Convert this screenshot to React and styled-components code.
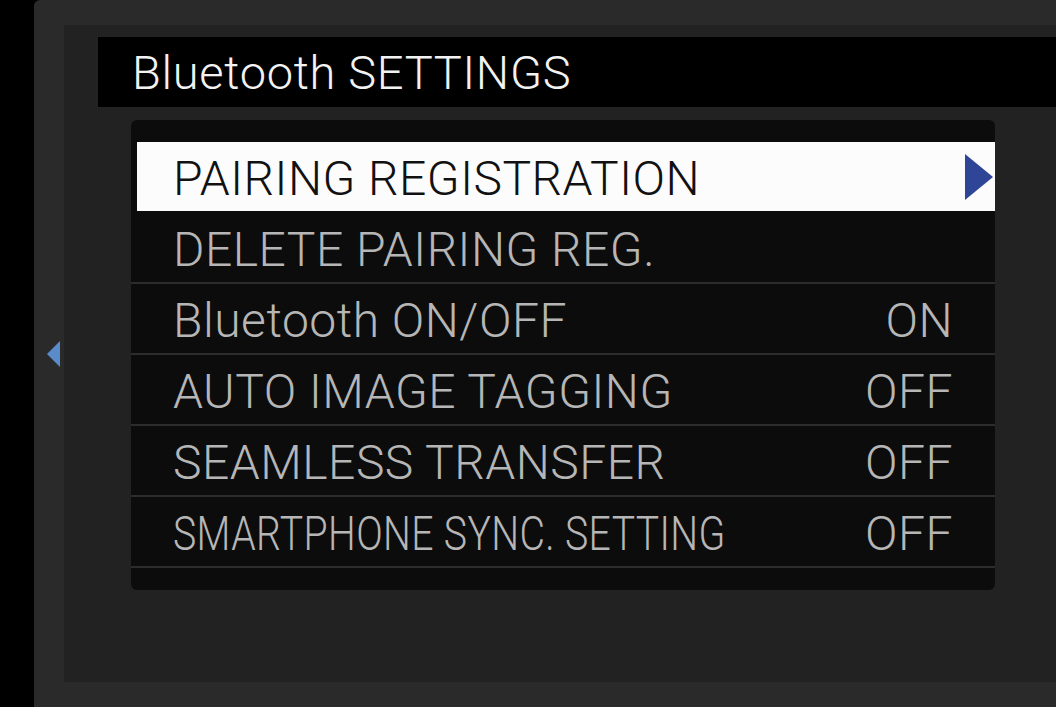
import React from 'react';
import styled, { createGlobalStyle } from 'styled-components';

const GlobalStyle = createGlobalStyle`
  html, body {
    margin: 0;
    padding: 0;
    background: #000;
    overflow: hidden;
  }
  body {
    font-family: Roboto, "Liberation Sans", sans-serif;
  }
`;

const Screen = styled.div`
  height: 707px;
  width: 1056px;
  display: flex;
`;

const Bezel = styled.div`
  margin-left: 34px;
  flex: 1;
  display: grid;
  grid-template-columns: 30px 1fr;
  padding: 25px 0 25px 0;
  background: #2a2a2a;
  border-top-left-radius: 6px;
`;

const Rail = styled.div`
  display: flex;
  align-items: center;
  justify-content: center;
`;

const LeftArrow = styled.div`
  width: 0;
  height: 0;
  border-top: 13px solid transparent;
  border-bottom: 13px solid transparent;
  border-right: 13px solid #5a8ccc;
  margin-left: 9px;
`;

const Inner = styled.div`
  background: #222;
  padding: 12px 0 0 34px;
  display: flex;
  flex-direction: column;
`;

const TitleBar = styled.div`
  height: 70px;
  background: #000;
  display: flex;
  align-items: center;
  padding-left: 34px;
  color: #f2f2f2;
  font-size: 47px;
  font-weight: 300;
  letter-spacing: 0.7px;
`;

const Panel = styled.div`
  margin: 13px 0 0 33px;
  width: 864px;
  height: 470px;
  box-sizing: border-box;
  padding: 22px 0 0;
  background: #0c0c0c;
  border-radius: 6px;
`;

const Row = styled.div`
  display: flex;
  align-items: center;
  justify-content: space-between;
  border-bottom: 2px solid #2c2c2c;
  margin-left: ${p => (p.$active ? '6px' : '0')};
  padding: 3px 42px 0 ${p => (p.$active ? '36px' : '42px')};
  box-sizing: border-box;
  height: 71px;
  background: ${p => (p.$active ? '#fcfcfc' : 'transparent')};
  color: ${p => (p.$active ? '#111' : '#b6b6b6')};
  font-size: 48px;
  font-weight: 300;
  letter-spacing: 0.5px;
  position: relative;
  ${p => p.$active && 'border-bottom-color: #0c0c0c;'}
`;

const Label = styled.span`
  display: inline-block;
  white-space: nowrap;
  transform-origin: left center;
  transform: ${p => (p.$squeeze ? 'scaleX(0.815)' : 'none')};
`;

const Value = styled.span`
  white-space: nowrap;
`;

const GoArrow = styled.div`
  position: absolute;
  right: 2px;
  top: 12px;
  width: 0;
  height: 0;
  border-top: 23px solid transparent;
  border-bottom: 23px solid transparent;
  border-left: 28px solid #2f4596;
`;

const items = [
  { label: 'PAIRING REGISTRATION', active: true },
  { label: 'DELETE PAIRING REG.' },
  { label: 'Bluetooth ON/OFF', value: 'ON' },
  { label: 'AUTO IMAGE TAGGING', value: 'OFF' },
  { label: 'SEAMLESS TRANSFER', value: 'OFF' },
  { label: 'SMARTPHONE SYNC. SETTING', value: 'OFF', squeeze: true },
];

const App = () => {
  return (
    <Screen>
      <GlobalStyle />
      <Bezel>
        <Rail>
          <LeftArrow />
        </Rail>
        <Inner>
          <TitleBar>Bluetooth SETTINGS</TitleBar>
          <Panel>
            {items.map(item => (
              <Row key={item.label} $active={item.active}>
                <Label $squeeze={item.squeeze}>{item.label}</Label>
                {item.value && <Value>{item.value}</Value>}
                {item.active && <GoArrow />}
              </Row>
            ))}
          </Panel>
        </Inner>
      </Bezel>
    </Screen>
  );
};

export default App;
